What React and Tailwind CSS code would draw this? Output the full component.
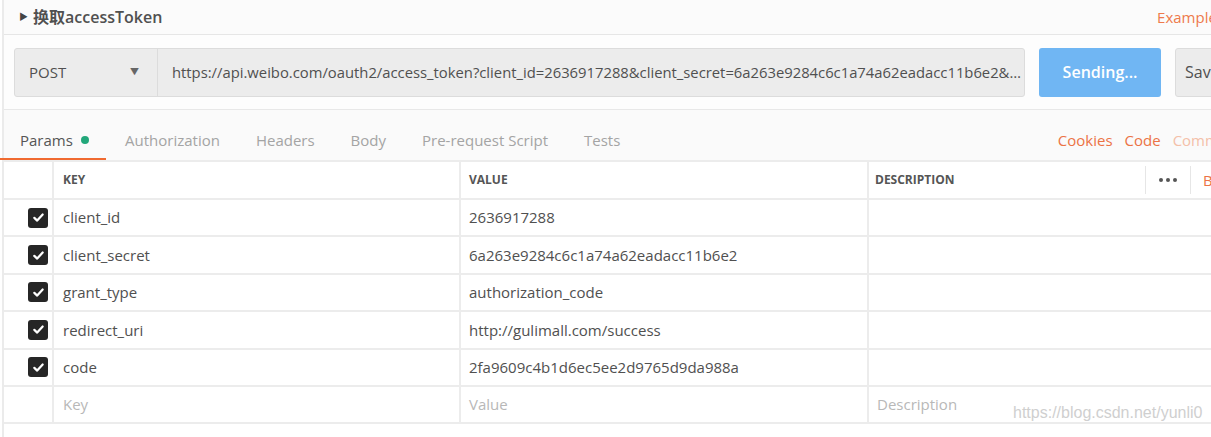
const font = { fontFamily: '"Open Sans", "Noto Sans CJK SC", sans-serif' };

const params = [
  { key: 'client_id', value: '2636917288' },
  { key: 'client_secret', value: '6a263e9284c6c1a74a62eadacc11b6e2' },
  { key: 'grant_type', value: 'authorization_code' },
  { key: 'redirect_uri', value: 'http://gulimall.com/success' },
  { key: 'code', value: '2fa9609c4b1d6ec5ee2d9765d9da988a' },
];

const url =
  'https://api.weibo.com/oauth2/access_token?client_id=2636917288&client_secret=6a263e9284c6c1a74a62eadacc11b6e2&grant_type=authorization_code&redirect_uri=http://gulimall.com/success&code=2fa9609c4b1d6ec5ee2d9765d9da988a';

function Check() {
  return (
    <div className="w-[20px] h-[20px] rounded-[3px] bg-[#262626] flex items-center justify-center">
      <svg width="13" height="13" viewBox="0 0 14 14" fill="none">
        <path d="M2.5 7.4 L5.6 10.3 L11.5 3.8" stroke="white" strokeWidth="2.4" strokeLinecap="round" strokeLinejoin="round" />
      </svg>
    </div>
  );
}

function Row({ children, header }) {
  return (
    <div
      className={`grid grid-cols-[50px_407px_408px_1fr] border-b-2 border-[#ececec] ${
        header ? 'h-[38px]' : 'h-[37.4px]'
      }`}
    >
      {children}
    </div>
  );
}

export default function App() {
  const tabs = ['Authorization', 'Headers', 'Body', 'Pre-request Script', 'Tests'];

  return (
    <div className="relative w-[1211px] h-[437px] overflow-hidden bg-white text-[#505050]" style={font}>
      <div className="ml-[2px] border-l-2 border-[#ebebeb] h-full">
        {/* titre */}
        <div className="h-[35px] flex items-center border-b border-[#e6e6e6] bg-[#fbfbfb] whitespace-nowrap">
          <span className="ml-[15px] text-[9px] text-[#444]">▶</span>
          <span className="ml-[5px] text-[16px] font-semibold text-[#505050]">换取accessToken</span>
          <span className="ml-auto mr-[-13px] text-[15px] text-[#ee7a4c]">Examples</span>
        </div>

        {/* barre URL */}
        <div className="flex items-center h-[75px] pl-[10px] border-b border-[#e8e8e8] bg-[#fdfdfd] whitespace-nowrap">
          <div className="flex h-[49px] w-[1011px] shrink-0 rounded-[3px] border border-[#dcdcdc] bg-[#ececec]">
            <div className="w-[143px] flex items-center pl-[14px] pr-[18px] border-r border-[#dcdcdc] text-[15px]">
              POST
              <span className="ml-auto text-[9px] text-[#666]">▼</span>
            </div>
            <div className="flex-1 min-w-0 flex items-center pl-[14px] pr-[3px]">
              <span className="truncate text-[14.8px] text-[#505050]">{url}</span>
            </div>
          </div>
          <button className="ml-[14px] w-[122px] h-[49px] shrink-0 rounded-[3px] bg-[#70b6f3] text-white text-[16px] font-semibold">
            Sending...
          </button>
          <button className="ml-[14px] w-[90px] h-[49px] shrink-0 rounded-l-[3px] bg-[#ececec] border border-[#dcdcdc] text-[16px] text-left pl-[9px]">
            Save
          </button>
        </div>

        {/* onglets */}
        <div className="flex items-end h-[52px] border-b-2 border-[#ececec] bg-[#fafafa] text-[15px] whitespace-nowrap">
          <div className="flex items-center w-[106px] ml-[-4px] pl-[20px] pb-[7px] text-[#555] border-b-2 border-[#f06a30] mb-0">
            Params
            <span className="ml-[8px] w-[8px] h-[8px] rounded-full bg-[#22a77a]" />
          </div>
          {tabs.map((t, i) => (
            <div key={t} className={`px-[18px] pb-[9px] text-[#a4a4a4] ${i === 0 ? 'ml-[1px]' : ''}`}>
              {t}
            </div>
          ))}
          <div className="ml-auto flex gap-[12px] pb-[9px] mr-[-38px]">
            <span className="text-[#ec7345]">Cookies</span>
            <span className="text-[#ec7345]">Code</span>
            <span className="text-[#f4c0a8]">Comments</span>
          </div>
        </div>

        {/* tableau */}
        <Row header>
          <div className="border-r-2 border-[#ececec]" />
          <div className="border-r-2 border-[#ececec] flex items-center pl-[9px] text-[12px] font-bold text-[#555]">KEY</div>
          <div className="border-r-2 border-[#ececec] flex items-center pl-[8px] text-[12px] font-bold text-[#555]">VALUE</div>
          <div className="flex items-center pl-[6px] text-[12px] font-bold text-[#555] whitespace-nowrap">
            DESCRIPTION
            <div className="ml-auto flex items-center h-[28px]">
              <div className="h-full border-l border-[#e6e6e6]" />
              <div className="px-[13px] flex gap-[3px]">
                <span className="w-[4px] h-[4px] rounded-full bg-[#555]" />
                <span className="w-[4px] h-[4px] rounded-full bg-[#555]" />
                <span className="w-[4px] h-[4px] rounded-full bg-[#555]" />
              </div>
              <div className="h-full border-l border-[#e6e6e6]" />
              <span className="pl-[12px] w-[20px] overflow-hidden text-[15px] font-normal text-[#ec7345]">Bulk Edit</span>
            </div>
          </div>
        </Row>
        {params.map((p) => (
          <Row key={p.key}>
            <div className="border-r-2 border-[#ececec] flex items-center justify-end pr-[4px]">
              <Check />
            </div>
            <div className="border-r-2 border-[#ececec] flex items-center pl-[9px] text-[15px]">{p.key}</div>
            <div className="border-r-2 border-[#ececec] flex items-center pl-[8px] text-[15px]">{p.value}</div>
            <div />
          </Row>
        ))}
        <Row>
          <div className="border-r-2 border-[#ececec]" />
          <div className="border-r-2 border-[#ececec] flex items-center pl-[9px] text-[15px] text-[#b8b8b8]">Key</div>
          <div className="border-r-2 border-[#ececec] flex items-center pl-[8px] text-[15px] text-[#b8b8b8]">Value</div>
          <div className="flex items-center pl-[8px] text-[15px] text-[#b8b8b8]">Description</div>
        </Row>
      </div>

      {/* filigrane */}
      <div
        className="absolute left-[1013px] top-[401px] text-[16px] text-[#cfcfcf]"
        style={{ fontFamily: '"Liberation Sans", sans-serif' }}
      >
        https://blog.csdn.net/yunli0
      </div>
    </div>
  );
}
